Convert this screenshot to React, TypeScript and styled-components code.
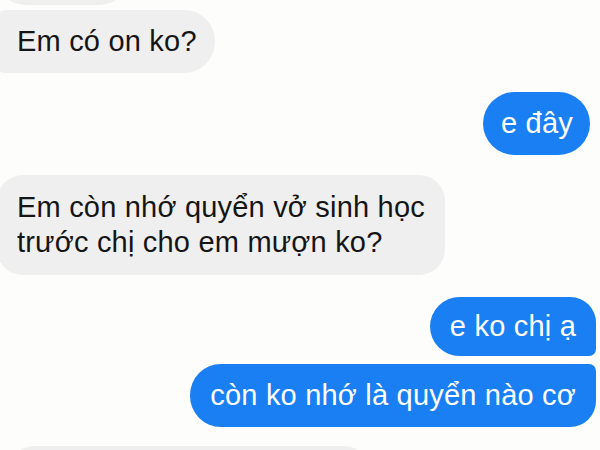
import React from "react";
import styled, { createGlobalStyle, css } from "styled-components";

const Global = createGlobalStyle`
  html, body { margin: 0; padding: 0; background: #fdfdfc; overflow: hidden; }
  body { font-family: "Liberation Sans", Arial, "Noto Sans", sans-serif; }
`;

const Thread = styled.div`
  width: 600px;
  height: 450px;
  overflow: hidden;
  display: flex;
  flex-direction: column;
  padding: 0 4px 0 0;
  box-sizing: border-box;
  background: #fdfdfc;
`;

type Side = "in" | "out";

const Row = styled.div<{ $side: Side; $gap: number }>`
  display: flex;
  justify-content: ${(p) => (p.$side === "in" ? "flex-start" : "flex-end")};
  margin-top: ${(p) => p.$gap}px;
  flex-shrink: 0;
`;

const Bubble = styled.div<{
  $side: Side;
  $radius?: string;
  $padY?: number;
  $padX?: number;
  $width?: number;
}>`
  font-size: 29px;
  line-height: 35px;
  letter-spacing: 0.2px;
  padding: ${(p) => p.$padY ?? 14}px ${(p) => p.$padX ?? 20}px;
  white-space: pre;
  border-radius: ${(p) => p.$radius ?? "31px"};
  box-sizing: border-box;
  ${(p) =>
    p.$side === "in"
      ? css`
          background: #efefef;
          color: #151515;
          margin-left: -3px;
        `
      : css`
          background: #1a7ff3;
          color: #ffffff;
        `}
  ${(p) =>
    p.$width !== undefined &&
    css`
      width: ${p.$width}px;
    `}
`;

const Cutoff = styled(Bubble)`
  margin-top: -58px;
  height: 63px;
`;

export default function App() {
  return (
    <>
      <Global />
      <Thread>
        <Row $side="in" $gap={0}>
          <Cutoff $side="in" $width={131} $radius="8px 28px 28px 28px" />
        </Row>
        <Row $side="in" $gap={5}>
          <Bubble $side="in" $radius="8px 31px 31px 8px" $width={218}>
            Em có on ko?
          </Bubble>
        </Row>
        <Row $side="out" $gap={19}>
          <Bubble $side="out" $width={107} $padX={18} $radius="32px" style={{ marginRight: 6 }}>
            e đây
          </Bubble>
        </Row>
        <Row $side="in" $gap={20}>
          <Bubble $side="in" $padY={15} $radius="26px">
            {"Em còn nhớ quyển vở sinh học\ntrước chị cho em mượn ko?"}
          </Bubble>
        </Row>
        <Row $side="out" $gap={22}>
          <Bubble $side="out" $padY={12} $radius="30px 26px 7px 30px">
            e ko chị ạ
          </Bubble>
        </Row>
        <Row $side="out" $gap={8}>
          <Bubble $side="out" $radius="31px 7px 26px 31px">
            còn ko nhớ là quyển nào cơ
          </Bubble>
        </Row>
        <Row $side="in" $gap={19}>
          <Bubble $side="in" $width={362} $radius="26px" style={{ marginLeft: 8 }}>
            {" "}
          </Bubble>
        </Row>
      </Thread>
    </>
  );
}
